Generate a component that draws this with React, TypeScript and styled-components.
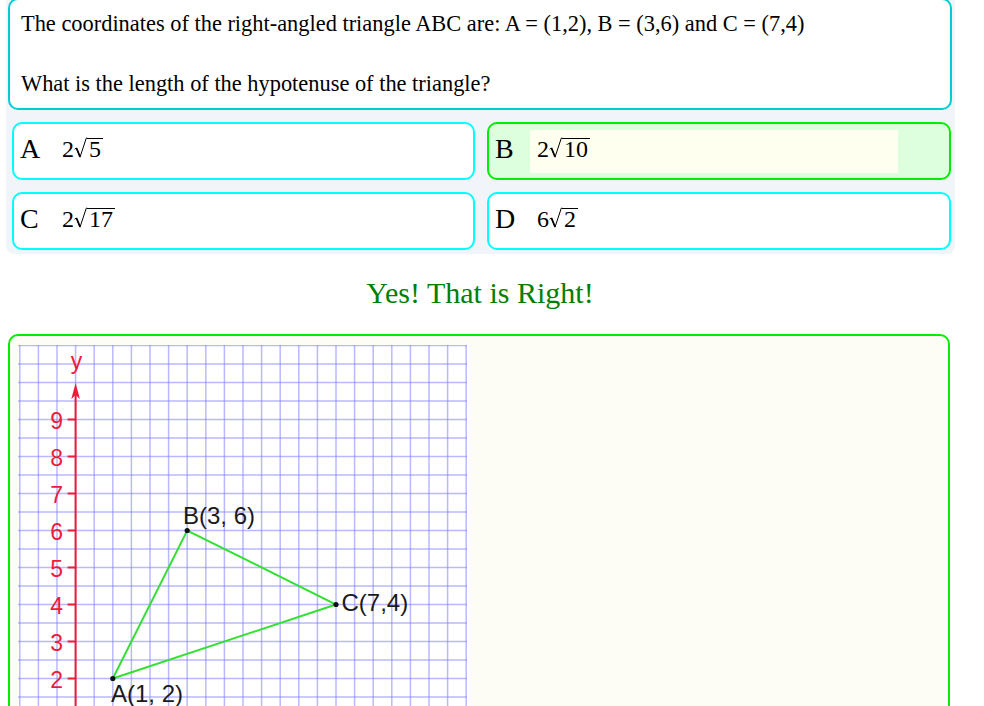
import React from 'react';
import styled, { createGlobalStyle } from 'styled-components';

const Global = createGlobalStyle`
  html, body { margin: 0; padding: 0; background: #ffffff; }
  body {
    padding: 0 8px;
    font-family: "Liberation Serif", "Times New Roman", serif;
    color: #000;
    overflow: hidden;
  }
`;

const Page = styled.div`
  width: 944px;
`;

const Panel = styled.div`
  margin: -2px -3px 0 -2px;
  padding: 0 3px 4px 2px;
  background: #f1f5f9;
  border-radius: 0 0 8px 8px;
`;

const QuestionBox = styled.div`
  border: 2px solid #00cdd2;
  border-radius: 10px;
  background: #ffffff;
  padding: 9px 11px;
  font-size: 22.4px;
  line-height: 30px;
`;

const QuestionLine = styled.div`
  min-height: 30px;
`;

const Options = styled.div`
  display: grid;
  grid-template-columns: 463px 464px;
  grid-auto-rows: 58px;
  column-gap: 12px;
  row-gap: 12px;
  margin-top: 12px;
  padding: 0 1px 0 4px;
`;

const OptionBox = styled.div<{ $correct?: boolean }>`
  display: flex;
  align-items: center;
  box-sizing: border-box;
  height: 58px;
  padding: 0 6px;
  border: 2px solid ${(p) => (p.$correct ? '#00ee00' : '#00ffff')};
  border-radius: 10px;
  background: ${(p) => (p.$correct ? '#ddffdd' : '#ffffff')};
`;

const Letter = styled.span`
  width: 35px;
  flex: none;
  font-size: 28px;
  line-height: 30px;
  margin-bottom: 4px;
`;

const Answer = styled.div<{ $selected?: boolean }>`
  display: flex;
  align-items: center;
  box-sizing: border-box;
  width: 368px;
  height: 43px;
  padding-left: 7px;
  background: ${(p) => (p.$selected ? '#fffff0' : 'transparent')};
`;

const Math = styled.span`
  font-family: "Liberation Serif", "Times New Roman", serif;
  font-size: 24px;
  line-height: 24px;
  white-space: nowrap;
  margin-bottom: 4px;
`;

const RadSvg = styled.svg`
  display: inline-block;
  vertical-align: -1px;
  width: 13px;
  height: 21px;
  overflow: visible;
`;

const Radicand = styled.span`
  display: inline-block;
  border-top: 1px solid #000;
  line-height: 20px;
  padding: 0 2px 0 2px;
`;

const Feedback = styled.div`
  text-align: center;
  color: #008000;
  font-size: 30px;
  line-height: 33px;
  margin: 22px 0 25px;
`;

const GraphBox = styled.div`
  width: 942px;
  box-sizing: border-box;
  height: 520px;
  border: 2px solid #00ee00;
  border-radius: 10px;
  background: #fdfdf6;
  padding: 9px 8px;
`;

const GraphSvg = styled.svg`
  display: block;
  background: #ffffff;
`;

const Sqrt: React.FC<{ children: React.ReactNode }> = ({ children }) => (
  <>
    <RadSvg viewBox="0 0 13 21">
      <path d="M0.6 12.2 L2.4 11 L6 20.2 L12.3 1.1 L13.2 1.1" fill="none" stroke="#000" strokeWidth="1" strokeLinejoin="round" />
      <path d="M2.5 11.2 L6 19.6" fill="none" stroke="#000" strokeWidth="1.7" />
    </RadSvg>
    <Radicand>{children}</Radicand>
  </>
);

const options = [
  { letter: 'A', coef: '2', rad: '5' },
  { letter: 'B', coef: '2', rad: '10', correct: true },
  { letter: 'C', coef: '2', rad: '17' },
  { letter: 'D', coef: '6', rad: '2' },
];

const gx = (k: number) => 1.8 + k * 18.6;
const gy = (j: number) => 0.5 + j * 18.5;
const ux = (x: number) => gx(3 + 2 * x);
const uy = (y: number) => gy(4 + (9 - y) * 2);

const RED = '#ec1c3a';

const Graph: React.FC = () => {
  const W = 451;
  const H = 451;
  const vLines = Array.from({ length: 25 }, (_, k) => gx(k));
  const hLines = Array.from({ length: 25 }, (_, j) => gy(j));
  const ticks = [0, 1, 2, 3, 4, 5, 6, 7, 8, 9];
  const A = [ux(1), uy(2)];
  const B = [ux(3), uy(6)];
  const C = [ux(7), uy(4)];
  const axisX = ux(0);
  return (
    <GraphSvg width={W} height={H} viewBox={`0 0 ${W} ${H}`}>
      <g stroke="#8080ff" strokeOpacity="0.55" strokeWidth="1.5">
        {vLines.map((x, i) => (
          <line key={'v' + i} x1={x} y1={0} x2={x} y2={H} />
        ))}
        {hLines.map((y, i) => (
          <line key={'h' + i} x1={0} y1={y} x2={W - 2} y2={y} />
        ))}
      </g>
      <line x1={axisX} y1={48} x2={axisX} y2={H} stroke={RED} strokeWidth="2" />
      <path d={`M${axisX} 38 L${axisX + 4.3} 54 L${axisX} 50 L${axisX - 4.3} 54 Z`} fill={RED} />
      <text x={axisX + 1} y={24} fill={RED} fontFamily='"Liberation Sans", Arial, sans-serif' fontSize="23" textAnchor="middle">
        y
      </text>
      {ticks.map((v) => (
        <g key={'t' + v}>
          <line x1={axisX - 8} y1={uy(v)} x2={axisX} y2={uy(v)} stroke={RED} strokeWidth="2" />
          <text x={45} y={uy(v) + 9} fill={RED} fontFamily='"Liberation Sans", Arial, sans-serif' fontSize="23" textAnchor="end">
            {v}
          </text>
        </g>
      ))}
      <polygon
        points={`${A[0]},${A[1]} ${B[0]},${B[1]} ${C[0]},${C[1]}`}
        fill="none"
        stroke="#33e033"
        strokeWidth="2"
      />
      {[A, B, C].map((p, i) => (
        <circle key={'p' + i} cx={p[0]} cy={p[1]} r="2.6" fill="#111" />
      ))}
      <g fill="#1a1a1a" fontFamily='"Liberation Sans", Arial, sans-serif' fontSize="24">
        <text x={165} y={179}>B(3, 6)</text>
        <text x={323.5} y={266}>C(7,4)</text>
        <text x={93} y={357}>A(1, 2)</text>
      </g>
    </GraphSvg>
  );
};

export default function App() {
  return (
    <>
      <Global />
      <Page>
        <Panel>
          <QuestionBox>
            <QuestionLine>
              The coordinates of the right-angled triangle ABC are: A = (1,2), B = (3,6) and C = (7,4)
            </QuestionLine>
            <QuestionLine />
            <QuestionLine>What is the length of the hypotenuse of the triangle?</QuestionLine>
          </QuestionBox>
          <Options>
            {options.map((o) => (
              <OptionBox key={o.letter} $correct={o.correct}>
                <Letter>{o.letter}</Letter>
                <Answer $selected={o.correct}>
                  <Math>
                    {o.coef}
                    <Sqrt>{o.rad}</Sqrt>
                  </Math>
                </Answer>
              </OptionBox>
            ))}
          </Options>
        </Panel>
        <Feedback>Yes! That is Right!</Feedback>
        <GraphBox>
          <Graph />
        </GraphBox>
      </Page>
    </>
  );
}
